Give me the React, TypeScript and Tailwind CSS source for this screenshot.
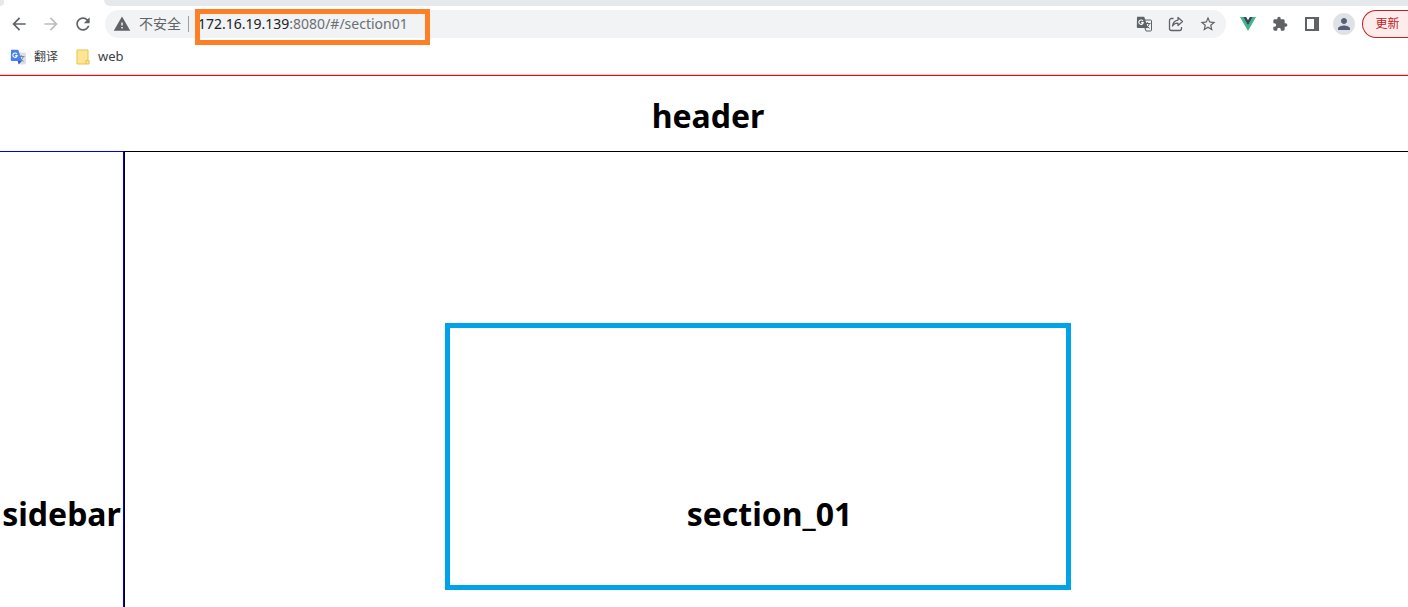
import React from "react";

const mdIcon = "h-5 w-5 shrink-0 fill-[#5f6368]";

function Icon({ d, className = mdIcon }: { d: string; className?: string }) {
  return (
    <svg viewBox="0 0 24 24" className={className} aria-hidden="true">
      <path d={d} />
    </svg>
  );
}

function TranslateIcon({ color }: { color: boolean }) {
  const front = color ? "#4a80ec" : "#5f6368";
  return (
    <svg viewBox="0 0 16 16" className="h-4 w-4 shrink-0" aria-hidden="true">
      <path
        d="M6 4h8.5a1 1 0 0 1 1 1v9a1 1 0 0 1-1 1H10z"
        fill={color ? "#dcdfe3" : "#f1f3f4"}
        stroke={color ? "#dcdfe3" : "#5f6368"}
      />
      <path d="M8.5 7.5h6M11.4 6.2v1.3M13.3 7.5c-.5 2.4-2 3.8-3.6 4.8M9.8 8.5c.8 1.7 2.2 3 3.8 3.9" fill="none" stroke={color ? "#7b8a9a" : "#5f6368"} />
      <path d="M1 0.8h7.2L12 12H1.8a1 1 0 0 1-1-1z" fill={front} />
      {color && <path d="M7.8 12H12l-3.4 3.4z" fill="#3058b8" />}
      <path d="M7 5.2A2.2 2.2 0 1 0 7.2 6.6H5.2" fill="none" stroke="#fff" strokeWidth="1.1" />
    </svg>
  );
}

function IconButton({ label, children }: { label: string; children: React.ReactNode }) {
  return (
    <button type="button" aria-label={label} className="flex h-8 w-8 shrink-0 items-center justify-center">
      {children}
    </button>
  );
}

function AddressBar() {
  return (
    <div className="flex h-7 min-w-0 flex-1 items-center rounded-full bg-[#f1f3f4] pr-0.5 pl-2">
      <Icon d="M1 21h22L12 2 1 21zm12-3h-2v-2h2v2zm0-4h-2v-4h2v4z" className="h-[18px] w-[18px] shrink-0 fill-[#5f6368]" />
      <span className="ml-2 shrink-0 text-sm text-[#5f6368]">不安全</span>
      <span className="ml-[7px] h-4 w-px shrink-0 bg-[#9aa0a6]" />
      <div className="relative ml-[9px] flex min-w-0 flex-1 items-center">
        <a href="#/section01" className="text-sm whitespace-nowrap text-[#6b6f73]">
          <span className="text-[#202124]">172.16.19.139</span>:8080/#/section01
        </a>
        <div className="pointer-events-none absolute -top-[5px] -left-[3px] h-9 w-[235px] border-[5px] border-[#ff7f27]" />
      </div>
      <IconButton label="翻译此页">
        <TranslateIcon color={false} />
      </IconButton>
      <IconButton label="分享">
        <svg viewBox="0 0 16 16" className="h-4 w-4 fill-none stroke-[#5f6368]" strokeWidth="1.3" strokeLinejoin="round" aria-hidden="true">
          <path d="M5.500 2.500H3.500a2 2 0 0 0-2 2v8a2 2 0 0 0 2 2h8a2 2 0 0 0 2-2V11" />
          <path d="M10 1.500l4.500 4-4.500 4V7.200C7.500 7.200 5.700 8 4.500 10c.4-3.200 2.300-5.400 5.500-5.900z" />
        </svg>
      </IconButton>
      <IconButton label="收藏">
        <Icon
          d="M22 9.240l-7.190-.62L12 2 9.190 8.630 2 9.240l5.460 4.730L5.820 21 12 17.270 18.180 21l-1.630-7.030L22 9.240zM12 15.400l-3.760 2.270 1-4.280-3.320-2.880 4.380-.38L12 6.100l1.710 4.040 4.380.38-3.320 2.880 1 4.280L12 15.400z"
          className="h-[18px] w-[18px] fill-[#5f6368]"
        />
      </IconButton>
    </div>
  );
}

function Toolbar() {
  return (
    <div className="flex h-9 items-center pl-[3px]">
      <IconButton label="后退">
        <Icon d="M20 11H7.830l5.590-5.590L12 4l-8 8 8 8 1.410-1.410L7.830 13H20v-2z" />
      </IconButton>
      <IconButton label="前进">
        <Icon d="M12 4l-1.410 1.410L16.170 11H4v2h12.170l-5.580 5.590L12 20l8-8z" className="h-5 w-5 shrink-0 fill-[#babcbe]" />
      </IconButton>
      <IconButton label="重新加载">
        <Icon d="M17.650 6.350C16.200 4.900 14.210 4 12 4c-4.420 0-7.990 3.580-7.990 8s3.570 8 7.990 8c3.730 0 6.840-2.550 7.730-6h-2.080c-.82 2.330-3.040 4-5.650 4-3.310 0-6-2.690-6-6s2.690-6 6-6c1.660 0 3.140.69 4.220 1.780L13 11h7V4l-2.350 2.350z" />
      </IconButton>
      <span className="w-1.5 shrink-0" />
      <AddressBar />
      <span className="w-1.5 shrink-0" />
      <IconButton label="Vue">
        <svg viewBox="0 0 16 14" className="h-3.5 w-4" aria-hidden="true">
          <path d="M0 0h3.200L8 8.200 12.800 0H16L8 14z" fill="#41b883" />
          <path d="M3.200 0h3L8 3.200 9.800 0h3L8 8.400z" fill="#34495e" />
        </svg>
      </IconButton>
      <IconButton label="扩展程序">
        <Icon
          d="M20.500 11H19V7c0-1.100-.9-2-2-2h-4V3.500C13 2.120 11.880 1 10.500 1S8 2.120 8 3.500V5H4c-1.100 0-1.990.9-1.990 2v3.800H3.500c1.490 0 2.700 1.210 2.700 2.700s-1.210 2.700-2.700 2.700H2V20c0 1.100.9 2 2 2h3.800v-1.500c0-1.490 1.210-2.700 2.700-2.700 1.490 0 2.700 1.210 2.700 2.700V22H17c1.100 0 2-.9 2-2v-4h1.500c1.380 0 2.500-1.120 2.500-2.500S21.880 11 20.500 11z"
          className="h-4 w-4 fill-[#5f6368]"
        />
      </IconButton>
      <IconButton label="侧边栏">
        <svg viewBox="0 0 14 14" className="h-3.5 w-3.5" aria-hidden="true">
          <path d="M0 0h14v14H0zM2 2v10h7V2z" fill="#5f6368" fillRule="evenodd" />
        </svg>
      </IconButton>
      <IconButton label="个人资料">
        <span className="flex h-[22px] w-[22px] items-center justify-center rounded-full bg-[#dee1e6]">
          <Icon
            d="M12 12c2.210 0 4-1.790 4-4s-1.790-4-4-4-4 1.790-4 4 1.790 4 4 4zm0 2c-2.670 0-8 1.340-8 4v2h16v-2c0-2.660-5.330-4-8-4z"
            className="h-[18px] w-[18px] fill-[#546077]"
          />
        </span>
      </IconButton>
      <button
        type="button"
        className="ml-0.5 h-7 w-[46px] shrink-0 rounded-l-full border border-r-0 border-[#c5221f] bg-[#fcecec] pl-1 text-xs text-[#c5221f]"
      >
        更新
      </button>
    </div>
  );
}

function Bookmarks() {
  return (
    <nav className="flex h-[33px] items-center gap-[18px] border-b border-[#dadce0] pb-0.5 pl-2.5 text-[#3c4043]">
      <a href="#/translate" className="flex items-center gap-2 text-xs">
        <TranslateIcon color />
        翻译
      </a>
      <a href="#/web" className="flex items-center gap-2 text-[13px]">
        <svg viewBox="0 0 14 16" className="h-4 w-3.5" aria-hidden="true">
          <path d="M1 1h11v10.500h1V15H1z" fill="#ffe695" stroke="#e8c34a" />
          <path d="M10 15v-3.500h3" fill="none" stroke="#e8c34a" />
        </svg>
        web
      </a>
    </nav>
  );
}

export default function App() {
  return (
    <div className="flex h-screen flex-col overflow-hidden bg-white font-['Noto_Sans','Noto_Sans_CJK_SC',sans-serif] text-black">
      <div className="shrink-0">
        <div className="flex h-1.5 bg-white">
          <span className="w-1 rounded-br-lg bg-[#e6e9ec]" />
          <span className="w-[100px]" />
          <span className="flex-1 rounded-bl-lg bg-[#e6e9ec]" />
        </div>
        <Toolbar />
        <Bookmarks />
      </div>
      <header className="flex h-[76px] shrink-0 items-center justify-center border-t border-[#ff0000] pt-1 pl-2">
        <h1 className="text-[32px] leading-12 font-bold">header</h1>
      </header>
      <div className="flex min-h-0 flex-1">
        <aside className="flex w-[124px] shrink-0 justify-center border-t border-r border-[#0000e6] pt-[338px]">
          <h2 className="text-[32px] leading-12 font-bold">sidebar</h2>
        </aside>
        <main className="relative flex min-w-0 flex-1 justify-center border-t border-l border-black pt-[338px] pl-1.5">
          <h2 className="text-[32px] leading-12 font-bold">section_01</h2>
          <div className="absolute top-[171px] left-[320px] h-[267px] w-[626px] border-[5px] border-[#00a2e8]" />
        </main>
      </div>
    </div>
  );
}
